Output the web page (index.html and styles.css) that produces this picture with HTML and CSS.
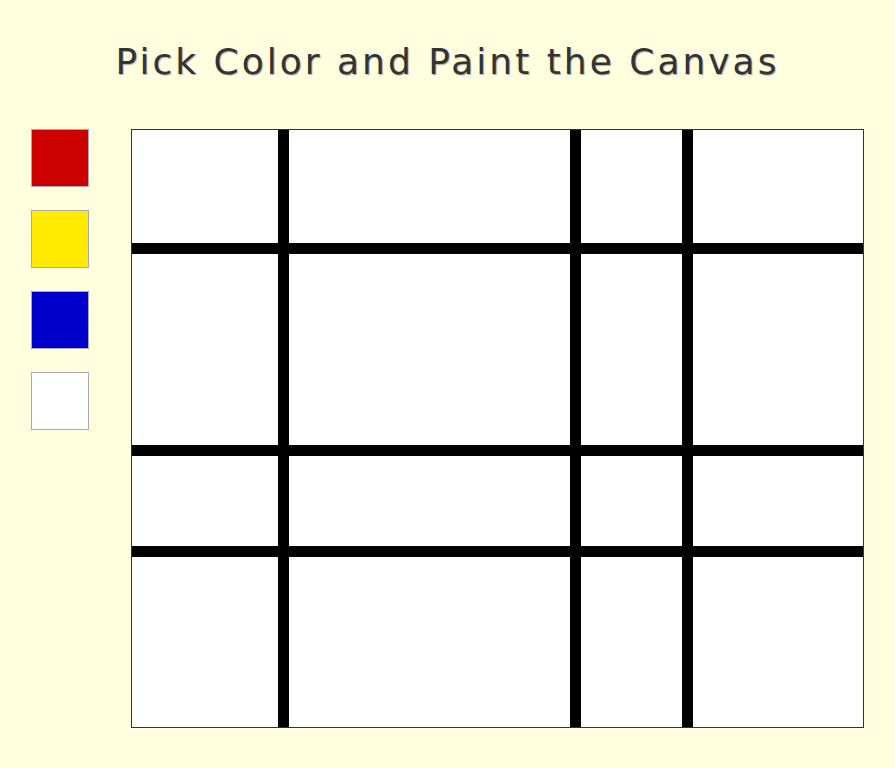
FILE: index.html
```html
<!DOCTYPE html>
<html>
<head>
<meta charset="utf-8">
<link rel="stylesheet" href="styles.css">
</head>
<body>
<h1 class="title">Pick Color and Paint the Canvas</h1>
<div class="main">
  <div class="palette">
    <div class="swatch red"></div>
    <div class="swatch yellow"></div>
    <div class="swatch blue"></div>
    <div class="swatch white"></div>
  </div>
  <div class="canvas">
    <div class="cell"></div><div class="bar"></div><div class="cell"></div><div class="bar"></div><div class="cell"></div><div class="bar"></div><div class="cell"></div>
    <div class="bar"></div><div class="bar"></div><div class="bar"></div><div class="bar"></div><div class="bar"></div><div class="bar"></div><div class="bar"></div>
    <div class="cell"></div><div class="bar"></div><div class="cell"></div><div class="bar"></div><div class="cell"></div><div class="bar"></div><div class="cell"></div>
    <div class="bar"></div><div class="bar"></div><div class="bar"></div><div class="bar"></div><div class="bar"></div><div class="bar"></div><div class="bar"></div>
    <div class="cell"></div><div class="bar"></div><div class="cell"></div><div class="bar"></div><div class="cell"></div><div class="bar"></div><div class="cell"></div>
    <div class="bar"></div><div class="bar"></div><div class="bar"></div><div class="bar"></div><div class="bar"></div><div class="bar"></div><div class="bar"></div>
    <div class="cell"></div><div class="bar"></div><div class="cell"></div><div class="bar"></div><div class="cell"></div><div class="bar"></div><div class="cell"></div>
  </div>
</div>
</body>
</html>
```
FILE: styles.css
```css
html, body {
  margin: 0;
  padding: 0;
  background: #ffffe0;
}
body {
  width: 895px;
  height: 768px;
  overflow: hidden;
}
.title {
  margin: 0;
  padding-top: 42px;
  height: 129px;
  box-sizing: border-box;
  text-align: center;
  font-family: "DejaVu Sans", sans-serif;
  font-weight: normal;
  font-size: 36px;
  line-height: 40px;
  letter-spacing: 3px;
  color: #333;
  text-shadow: 1px 1px 1px #aaa;
}
.main {
  display: flex;
  align-items: flex-start;
  padding-left: 31px;
}
.palette {
  display: flex;
  flex-direction: column;
  gap: 23px;
}
.swatch {
  width: 56px;
  height: 56px;
  border: 1px solid #aaa;
}
.red { background: #cc0000; }
.yellow { background: #ffea00; }
.blue { background: #0000cc; }
.white { background: #ffffff; }
.canvas {
  margin-left: 42px;
  border: 1px solid #333;
  background: #fff;
  display: grid;
  grid-template-columns: 146px 11px 281px 11px 101px 11px 170px;
  grid-template-rows: 113px 11px 191px 11px 90px 11px 170px;
}
.cell { background: #fff; }
.bar { background: #000; }
```
